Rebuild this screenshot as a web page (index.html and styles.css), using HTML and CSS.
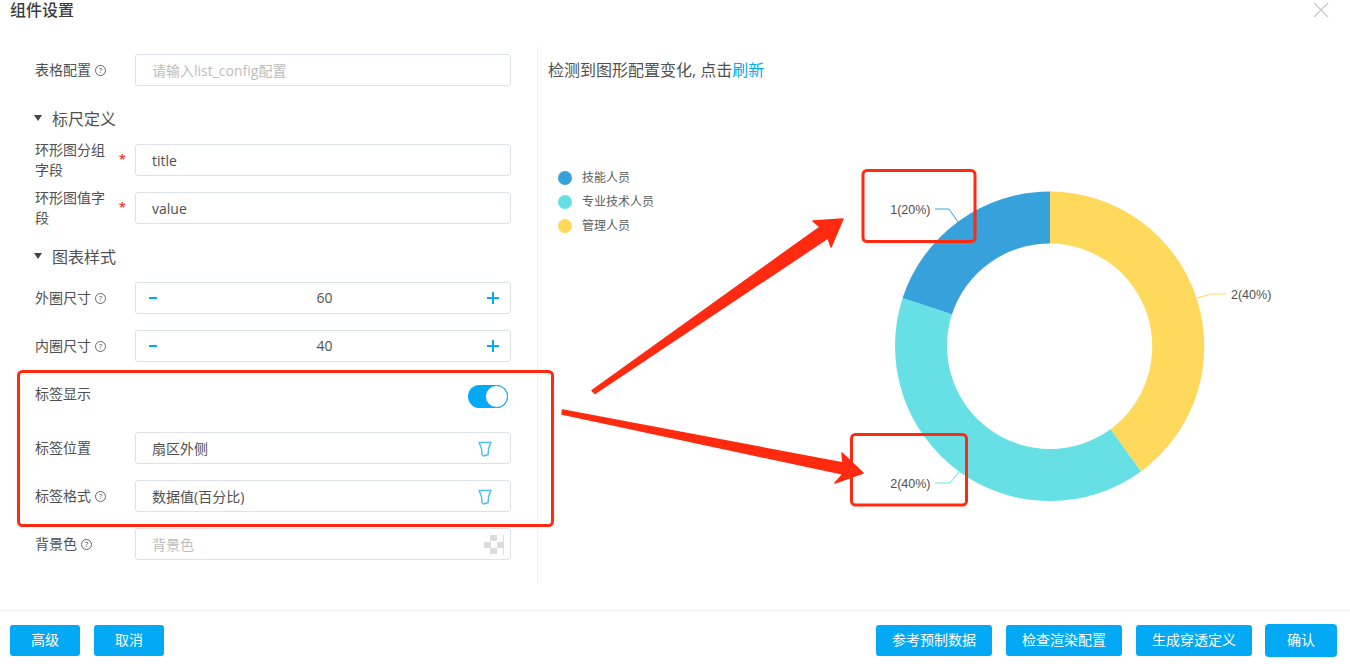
FILE: index.html
```html
<!DOCTYPE html>
<html lang="zh-CN">
<head>
<meta charset="utf-8">
<title>组件设置</title>
<link rel="stylesheet" href="styles.css">
</head>
<body>
<div class="modal">
  <header class="modal-head">
    <h1 class="modal-title">组件设置</h1>
    <svg class="close" width="16" height="16" viewBox="0 0 16 16"><path d="M1 1L15 15M15 1L1 15" stroke="#c8c8c8" stroke-width="1.2" fill="none"/></svg>
  </header>
  <main class="modal-body">
    <section class="form">
      <div class="row">
        <label class="label">表格配置<span class="help">?</span></label>
        <div class="field placeholder">请输入list_config配置</div>
      </div>
      <div class="section"><span class="caret"></span>标尺定义</div>
      <div class="row">
        <label class="label"><span class="label-wrap">环形图分组字段</span><span class="star">*</span></label>
        <div class="field">title</div>
      </div>
      <div class="row">
        <label class="label"><span class="label-wrap">环形图值字段</span><span class="star">*</span></label>
        <div class="field">value</div>
      </div>
      <div class="section"><span class="caret"></span>图表样式</div>
      <div class="row">
        <label class="label">外圈尺寸<span class="help">?</span></label>
        <div class="field stepper">
          <svg class="minus" width="8" height="2" viewBox="0 0 8 2"><rect width="8" height="2" fill="#03a9f4"/></svg>
          <span>60</span>
          <svg width="12" height="12" viewBox="0 0 12 12"><path d="M0 6H12M6 0V12" stroke="#03a9f4" stroke-width="2"/></svg>
        </div>
      </div>
      <div class="row">
        <label class="label">内圈尺寸<span class="help">?</span></label>
        <div class="field stepper">
          <svg class="minus" width="8" height="2" viewBox="0 0 8 2"><rect width="8" height="2" fill="#03a9f4"/></svg>
          <span>40</span>
          <svg width="12" height="12" viewBox="0 0 12 12"><path d="M0 6H12M6 0V12" stroke="#03a9f4" stroke-width="2"/></svg>
        </div>
      </div>
      <div class="row row-toggle">
        <label class="label">标签显示</label>
        <div class="toggle-wrap"><span class="toggle"><span class="knob"></span></span></div>
      </div>
      <div class="row">
        <label class="label">标签位置</label>
        <div class="field select">扇区外侧
          <svg width="14" height="16" viewBox="0 0 14 16"><path d="M1 1.5H13L10.5 7.5L10.2 13.5L5.5 15L4 13.5L3.5 7.5Z" stroke="#4dbcf5" stroke-width="1.4" fill="none" stroke-linejoin="round"/></svg>
        </div>
      </div>
      <div class="row">
        <label class="label">标签格式<span class="help">?</span></label>
        <div class="field select">数据值(百分比)
          <svg width="14" height="16" viewBox="0 0 14 16"><path d="M1 1.5H13L10.5 7.5L10.2 13.5L5.5 15L4 13.5L3.5 7.5Z" stroke="#4dbcf5" stroke-width="1.4" fill="none" stroke-linejoin="round"/></svg>
        </div>
      </div>
      <div class="row">
        <label class="label">背景色<span class="help">?</span></label>
        <div class="field select placeholder">背景色<span class="checker"></span></div>
      </div>
    </section>
    <section class="preview">
      <p class="notice">检测到图形配置变化, 点击<a class="refresh">刷新</a></p>
      <div class="chart">
        <ul class="legend">
          <li class="legend-item"><span class="dot dot-blue"></span>技能人员</li>
          <li class="legend-item"><span class="dot dot-teal"></span>专业技术人员</li>
          <li class="legend-item"><span class="dot dot-yellow"></span>管理人员</li>
        </ul>
        <svg class="donut" width="400" height="340" viewBox="880 180 400 340">
          <path fill="#ffd95c" d="M1050 191.5A155 155 0 0 1 1141.1 471.4L1110.5 429.3A103 103 0 0 0 1050 243.5Z"/>
          <path fill="#66e0e4" d="M1141.1 471.4A155 155 0 0 1 902.6 298.1L952 314.2A103 103 0 0 0 1110.5 429.3Z"/>
          <path fill="#36a1db" d="M902.6 298.1A155 155 0 0 1 1050 191.5V243.5A103 103 0 0 0 952 314.2Z"/>
          <path d="M935 209H949L958 222" stroke="#36a1db" fill="none"/>
          <path d="M935 483H950L959 472" stroke="#66e0e4" fill="none"/>
          <path d="M1197 298L1211 294H1226" stroke="#ffd95c" fill="none"/>
          <text class="slice-label" x="930.5" y="214" text-anchor="end">1(20%)</text>
          <text class="slice-label" x="930.5" y="488" text-anchor="end">2(40%)</text>
          <text class="slice-label" x="1231" y="299">2(40%)</text>
        </svg>
      </div>
    </section>
  </main>
  <footer class="modal-foot">
    <div class="btn-group">
      <button class="btn btn-left">高级</button>
      <button class="btn btn-left">取消</button>
    </div>
    <div class="btn-group">
      <button class="btn">参考预制数据</button>
      <button class="btn">检查渲染配置</button>
      <button class="btn">生成穿透定义</button>
      <button class="btn btn-ok">确认</button>
    </div>
  </footer>
  <svg class="annotations" width="1350" height="664" viewBox="0 0 1350 664">
    <g fill="none" stroke="#ff2a10" stroke-width="3">
      <rect x="18.5" y="371.5" width="534" height="154" rx="4"/>
      <rect x="863" y="170.5" width="112" height="71" rx="4"/>
      <rect x="851.5" y="434.5" width="115" height="70.5" rx="4"/>
    </g>
    <g fill="#ff2a10" stroke="#ff2a10" stroke-linejoin="round">
      <polygon points="592,390.5 595,393.5 828,238 831,247 843,219 813,221 820,227" stroke-width="1.5"/>
      <polygon points="562.5,410 562,414 843,474 835,483 863,473 842,453 843,463" stroke-width="1.5"/>
    </g>
  </svg>
</div>
</body>
</html>
```
FILE: styles.css
```css
* { box-sizing: border-box; }
html, body { margin: 0; padding: 0; }
body {
  width: 1350px;
  height: 664px;
  overflow: hidden;
  background: #fff;
  color: #505050;
  font-family: "Open Sans", "Noto Sans CJK SC", sans-serif;
  font-size: 14px;
}
.modal { position: relative; display: flex; flex-direction: column; height: 664px; }
.modal-head {
  display: flex;
  justify-content: space-between;
  align-items: flex-start;
  height: 47px;
  padding: 0 21px 0 10px;
}
.modal-title { margin: 0; font-size: 16px; font-weight: 500; line-height: 20px; color: #3c3c3c; }
.close { margin-top: 2px; }
.modal-body { display: flex; height: 563px; align-items: flex-start; }
.form {
  width: 538px;
  height: 537px;
  padding: 7px 0 0 35px;
  border-right: 1px solid #f0f2f5;
}
.row { display: flex; align-items: center; height: 32px; margin-bottom: 16px; }
.label { display: flex; align-items: center; width: 100px; flex: none; line-height: 20px; }
.label-wrap { width: 72px; }
.star { margin: 0 0 0 12px; color: #ff3b30; font-size: 12px; font-weight: 700; line-height: 12px; }
.help {
  display: inline-flex;
  align-items: center;
  justify-content: center;
  width: 11px;
  height: 11px;
  margin-left: 4px;
  border: 1px solid #666;
  border-radius: 50%;
  font-size: 8px;
  line-height: 1;
  color: #555;
}
.field {
  display: flex;
  align-items: center;
  width: 376px;
  height: 32px;
  padding: 1px 16px 0;
  border: 1px solid #dde2ea;
  border-radius: 3px;
  background: #fff;
  color: #505050;
  line-height: 20px;
}
.placeholder { color: #bdbdbd; }
.stepper { justify-content: space-between; padding: 0 11px 0 13px; }
.minus { margin-right: 5px; }
.select { justify-content: space-between; padding-right: 18px; }
.checker {
  width: 20px;
  height: 20px;
  margin-right: -12px;
  background: repeating-conic-gradient(#dcdcdc 0 25%, #fff 0 50%) 0 0 / 13px 13px;
}
.section { display: flex; align-items: center; height: 33px; margin-bottom: 9px; font-size: 16px; line-height: 20px; color: #505050; }
.caret {
  width: 0;
  height: 0;
  margin: -2px 10px 0 -1px;
  border-left: 4px solid transparent;
  border-right: 4px solid transparent;
  border-top: 6px solid #444;
}
.row-toggle { align-items: flex-start; height: 38px; }
.row-toggle .label { line-height: 32px; }
.toggle-wrap { display: flex; justify-content: flex-end; width: 376px; padding: 7px 3px 0 0; }
.toggle {
  display: flex;
  justify-content: flex-end;
  width: 40px;
  height: 23px;
  border-radius: 12px;
  background: #03a9f4;
}
.knob {
  width: 23px;
  height: 23px;
  border: 1px solid #03a9f4;
  border-radius: 50%;
  background: #fff;
}
.preview { flex: 1; }
.notice { margin: 13px 0 0 10px; font-size: 16px; line-height: 20px; color: #505050; }
.refresh { color: #03a9f4; }
.chart { display: flex; align-items: flex-start; }
.legend { width: 342px; margin: 86px 0 0; padding: 0 0 0 20px; list-style: none; }
.legend-item { display: flex; align-items: center; height: 24px; font-size: 12px; line-height: 16px; color: #5c5c5c; }
.dot { width: 14px; height: 14px; margin-right: 10px; border-radius: 50%; }
.dot-blue { background: #36a1db; }
.dot-teal { background: #66e0e4; }
.dot-yellow { background: #ffd95c; }
.donut { margin-top: 100px; }
.slice-label { font-family: "Liberation Sans", sans-serif; font-size: 12.5px; fill: #505050; }
.modal-foot {
  display: flex;
  justify-content: space-between;
  align-items: center;
  height: 54px;
  padding: 5px 13px 0 10px;
  border-top: 1px solid #f2f2f2;
}
.btn-group { display: flex; align-items: center; gap: 14px; }
.btn {
  width: 116px;
  height: 31px;
  padding: 0;
  border: 0;
  border-radius: 3px;
  background: #03a9f4;
  color: #fff;
  font: inherit;
  line-height: 20px;
}
.btn-left { width: 70px; }
.btn-ok { width: 72px; height: 33px; margin-left: -1px; border-radius: 4px; }
.annotations { position: absolute; left: 0; top: 0; pointer-events: none; }
```
